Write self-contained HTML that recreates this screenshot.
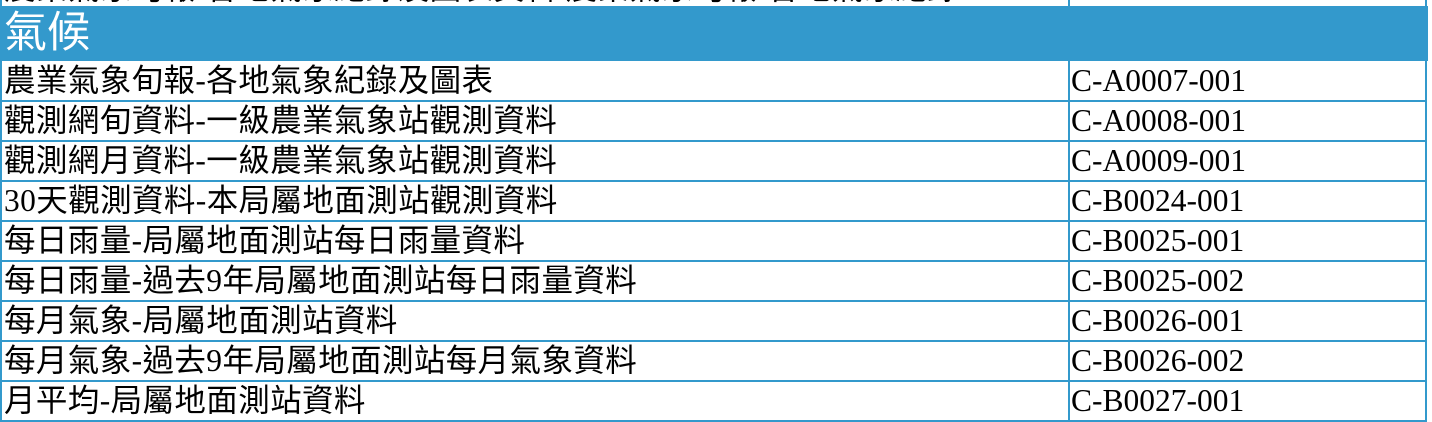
<!DOCTYPE html>
<html><head><meta charset="utf-8"><style>
body{margin:0;width:1432px;height:421px;overflow:hidden;background:#fff;position:relative;font-family:"Liberation Serif","Noto Sans CJK TC",serif;}
.l{position:absolute;background:#3399cc;}
.t{position:absolute;font-size:31.5px;line-height:38px;color:#000;white-space:nowrap;}
.c{letter-spacing:0.4px;}
</style></head><body>
<div class="t c" style="left:4px;top:-30px">農業氣象旬報-各地氣象紀錄及圖表資料 農業氣象旬報-各地氣象紀錄</div>
<div class="l" style="left:0;top:6px;width:1428px;height:55px"></div>
<div class="t" style="left:4px;top:10px;font-size:43px;line-height:48px;color:#fff">氣候</div>
<div class="l" style="left:0;top:0;width:2px;height:421px"></div>
<div class="l" style="left:1425px;top:0;width:2px;height:421px"></div>
<div class="l" style="left:1068px;top:0;width:2px;height:6px"></div>
<div class="l" style="left:1068px;top:61px;width:2px;height:360px"></div>
<div id="rows"></div>
<script>
var d=[["農業氣象旬報-各地氣象紀錄及圖表","C-A0007-001"],["觀測網旬資料-一級農業氣象站觀測資料","C-A0008-001"],["觀測網月資料-一級農業氣象站觀測資料","C-A0009-001"],["30天觀測資料-本局屬地面測站觀測資料","C-B0024-001"],["每日雨量-局屬地面測站每日雨量資料","C-B0025-001"],["每日雨量-過去9年局屬地面測站每日雨量資料","C-B0025-002"],["每月氣象-局屬地面測站資料","C-B0026-001"],["每月氣象-過去9年局屬地面測站每月氣象資料","C-B0026-002"],["月平均-局屬地面測站資料","C-B0027-001"]];
var h="";
for(var i=0;i<d.length;i++){var y=62+40*i;
h+='<div class="t c" style="left:4px;top:'+y+'px">'+d[i][0]+'</div>';
h+='<div class="t" style="left:1071px;top:'+y+'px">'+d[i][1]+'</div>';
h+='<div class="l" style="left:0;top:'+(y+38)+'px;width:1427px;height:2px"></div>';}
document.getElementById("rows").outerHTML=h;
</script>
</body></html>
